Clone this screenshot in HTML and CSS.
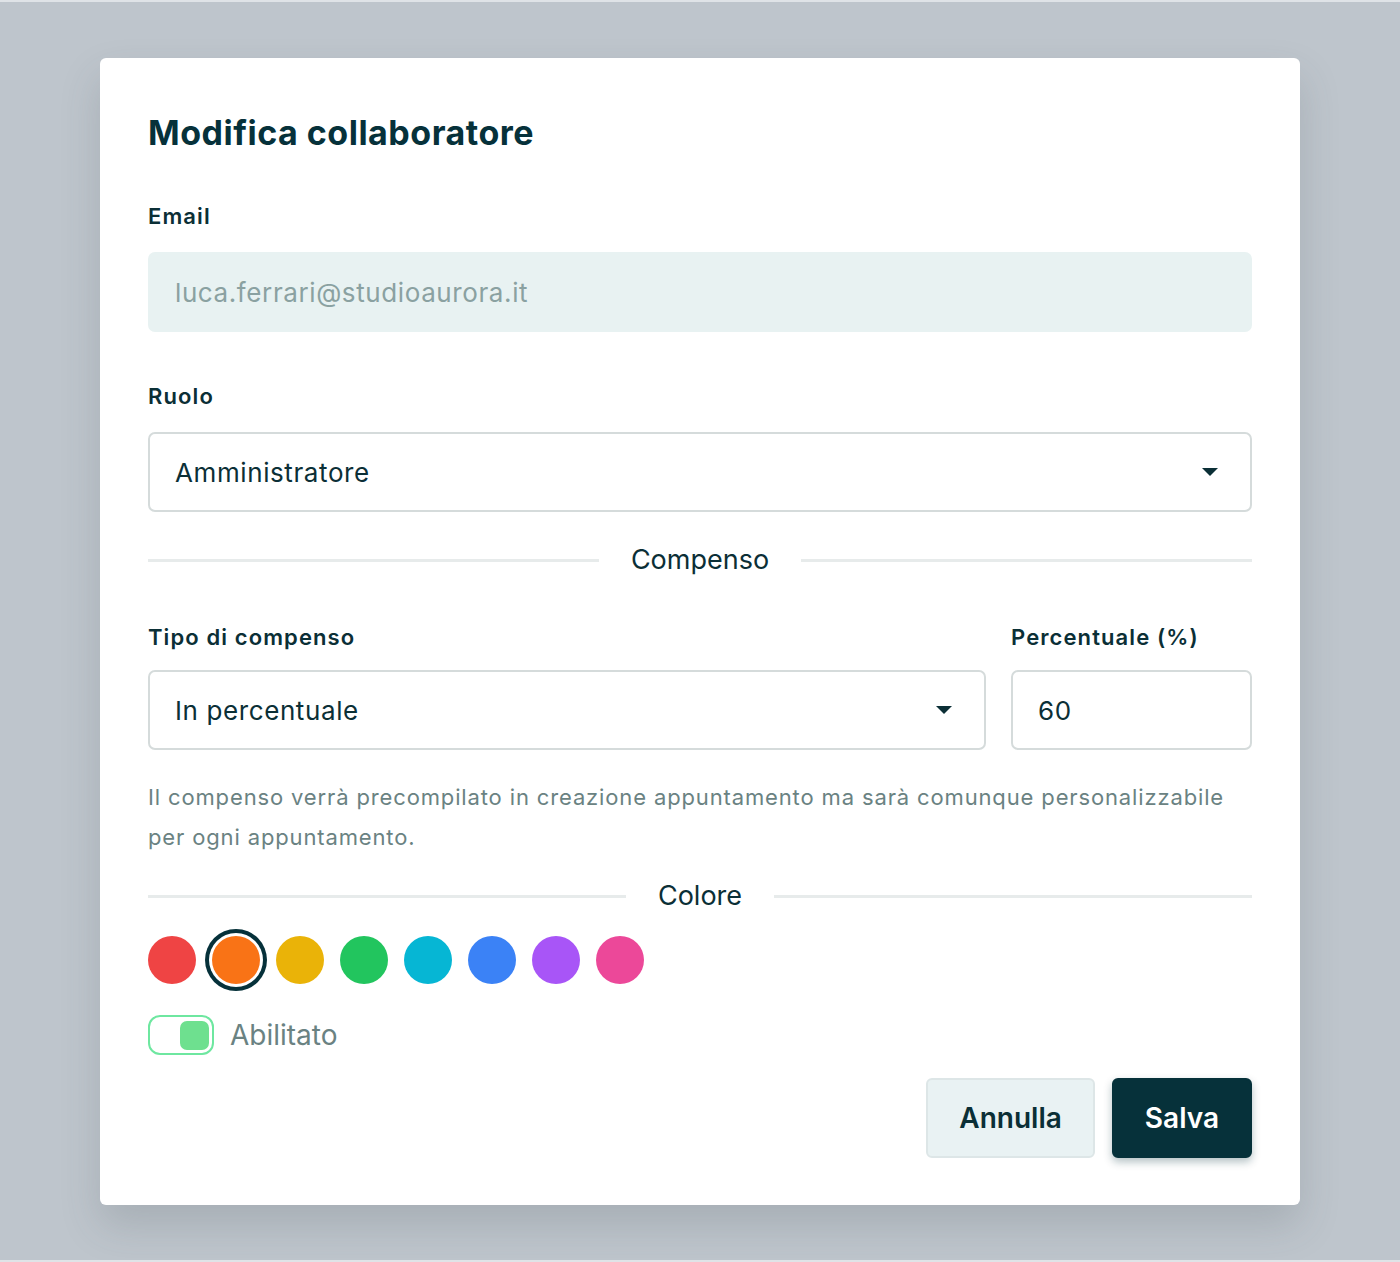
FILE: index.html
```html
<!DOCTYPE html>
<html lang="it">
<head>
<meta charset="utf-8">
<title>Modifica collaboratore</title>
<link rel="stylesheet" href="styles.css">
</head>
<body>
<div class="overlay">
  <div class="modal">
    <h1 class="title">Modifica collaboratore</h1>

    <div class="field">
      <label class="label">Email</label>
      <div class="input input-disabled">luca.ferrari@studioaurora.it</div>
    </div>

    <div class="field">
      <label class="label">Ruolo</label>
      <div class="input select">
        <span>Amministratore</span>
        <svg class="caret" width="16" height="10" viewBox="0 0 16 10"><path d="M0 1 L16 1 L8 9 Z" fill="#0b2f36"/></svg>
      </div>
    </div>

    <div class="divider divider-compenso"><span class="line"></span><span class="divider-text">Compenso</span><span class="line"></span></div>

    <div class="row">
      <div class="field col-main">
        <label class="label">Tipo di compenso</label>
        <div class="input select">
          <span>In percentuale</span>
          <svg class="caret" width="16" height="10" viewBox="0 0 16 10"><path d="M0 1 L16 1 L8 9 Z" fill="#0b2f36"/></svg>
        </div>
      </div>
      <div class="field col-side">
        <label class="label">Percentuale (%)</label>
        <div class="input">60</div>
      </div>
    </div>

    <p class="help">Il compenso verrà precompilato in creazione appuntamento ma sarà comunque personalizzabile per ogni appuntamento.</p>

    <div class="divider divider-colore"><span class="line"></span><span class="divider-text">Colore</span><span class="line"></span></div>

    <div class="swatches">
      <span class="swatch red"></span>
      <span class="swatch orange selected"></span>
      <span class="swatch yellow"></span>
      <span class="swatch green"></span>
      <span class="swatch cyan"></span>
      <span class="swatch blue"></span>
      <span class="swatch purple"></span>
      <span class="swatch pink"></span>
    </div>

    <div class="toggle-row">
      <span class="toggle"><span class="knob"></span></span>
      <span class="toggle-label">Abilitato</span>
    </div>

    <div class="actions">
      <button class="btn btn-secondary">Annulla</button>
      <button class="btn btn-primary">Salva</button>
    </div>
  </div>
</div>
</body>
</html>
```

FILE: styles.css
```css
* { box-sizing: border-box; }
html, body { margin: 0; padding: 0; }
body {
  background: #dfe3e7;
  font-family: Inter, "Noto Sans", sans-serif;
  color: #0b2f36;
}
.overlay {
  margin-top: 2px;
  height: 1258px;
  background: #bec5cc;
  padding: 56px 100px 0 100px;
}
.modal {
  background: #ffffff;
  border-radius: 6px;
  box-shadow: 0 20px 40px rgba(60, 70, 80, 0.18);
  padding: 53px 48px 48px 48px;
  height: 1147px;
}
.title {
  margin: 0 0 47px 0;
  font-size: 34px;
  font-weight: 700;
  line-height: 44px;
  letter-spacing: 0.5px;
  color: #06313a;
}
.field { display: flex; flex-direction: column; }
.label {
  font-size: 22px;
  font-weight: 600;
  line-height: 28px;
  letter-spacing: 1.1px;
  margin-bottom: 22px;
  color: #0b2f36;
}
.input {
  height: 80px;
  border: 2px solid #d5dbdb;
  border-radius: 7px;
  padding: 0 25px;
  display: flex;
  align-items: center;
  font-size: 26px;
  letter-spacing: 0.6px;
  color: #0b2f36;
  background: #fff;
}
.input-disabled {
  background: #e8f2f2;
  border-color: #e8f2f2;
  color: #8aa1a1;
  margin-bottom: 50px;
}
.select { justify-content: space-between; padding-right: 32px; }
.caret { display: block; }
.divider {
  display: flex;
  align-items: center;
  gap: 32px;
}
.divider .line { flex: 1; height: 3px; background: #e7ebeb; }
.divider-text { font-size: 27px; color: #0b2f36; line-height: 36px; }
.divider-compenso { margin-top: 30px; margin-bottom: 45px; }
.divider-colore { margin-top: 21px; margin-bottom: 22px; }
.row { display: flex; gap: 25px; }
.row .label { margin-bottom: 19px; }
.col-main { flex: 1; }
.col-side { width: 241px; }
.help {
  margin: 27px 0 0 0;
  font-size: 22px;
  line-height: 40px;
  letter-spacing: 0.86px;
  color: #6a8282;
}
.swatches { display: flex; gap: 16px; align-items: center; }
.swatch {
  width: 48px; height: 48px; border-radius: 50%;
  display: block;
}
.swatch.selected {
  box-shadow: 0 0 0 3px #fff, 0 0 0 7px #06313a;
}
.red { background: #ef4444; }
.orange { background: #f97316; }
.yellow { background: #eab308; }
.green { background: #22c55e; }
.cyan { background: #06b6d4; }
.blue { background: #3b82f6; }
.purple { background: #a855f7; }
.pink { background: #ec4899; }
.toggle-row {
  display: flex;
  align-items: center;
  gap: 16px;
  margin-top: 31px;
}
.toggle {
  width: 66px; height: 40px;
  border: 2px solid #6ee7a0;
  border-radius: 12px;
  display: flex;
  align-items: center;
  justify-content: flex-end;
  padding-right: 3px;
}
.knob {
  width: 29px; height: 29px;
  border-radius: 7px;
  background: #6ee08f;
}
.toggle-label { font-size: 28px; color: #6a8282; }
.actions {
  display: flex;
  justify-content: flex-end;
  gap: 17px;
  margin-top: 23px;
}
.btn {
  height: 80px;
  border-radius: 6px;
  font-family: Inter, "Noto Sans", sans-serif;
  font-size: 28px;
  font-weight: 600;
  padding: 0 31px;
  cursor: pointer;
}
.btn-secondary {
  background: #e9f2f3;
  color: #0b2f36;
  border: 2px solid #dde6e7;
}
.btn-primary {
  background: #06313a;
  color: #fff;
  border: 2px solid #06313a;
  box-shadow: 0 4px 8px rgba(6, 49, 58, 0.3);
}
```
